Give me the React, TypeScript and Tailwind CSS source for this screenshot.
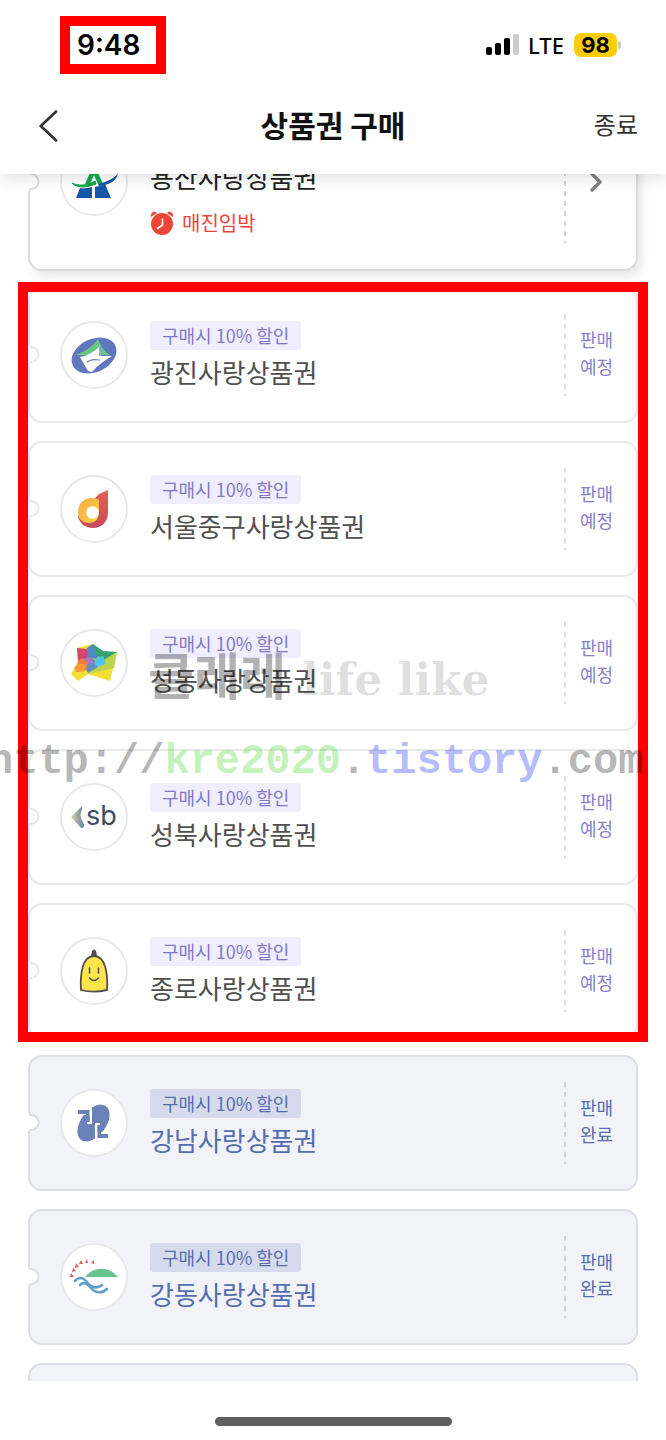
import type { ReactNode } from 'react';
import { ChevronRight } from 'lucide-react';

type Status = 'open' | 'scheduled' | 'soldout';

interface Voucher {
  name: string;
  logo: ReactNode;
}

const DISCOUNT = '구매시 10% 할인';

const cardStyles: Record<Status, string> = {
  open: 'h-[178px] border-[#dcdcdc] bg-white shadow-[4px_6px_10px_rgba(0,0,0,0.09)]',
  scheduled: 'h-[136px] border-[#e8e8e8] bg-white',
  soldout: 'h-[136px] border-[#dddfe7] bg-[#f2f3f8]',
};

const badgeStyles: Record<Status, string> = {
  open: 'bg-[#efedfe] text-[#7f7ac8]',
  scheduled: 'bg-[#efedfe] text-[#7f7ac8]',
  soldout: 'bg-[#d5dbed] text-[#566db0]',
};

const nameStyles: Record<Status, string> = {
  open: 'text-[#222222]',
  scheduled: 'text-[#505050]',
  soldout: 'text-[#566db0]',
};

const dashStyles: Record<Status, string> = {
  open: 'h-[122px] text-[#d4d4d4]',
  scheduled: 'h-[82px] text-[#dedede]',
  soldout: 'h-[82px] text-[#cfd0d8]',
};

const notchStyles: Record<Status, string> = {
  open: 'fill-white stroke-[#dcdcdc]',
  scheduled: 'fill-[#fafafa] stroke-[#e8e8e8]',
  soldout: 'fill-white stroke-[#dddfe7]',
};

function YongsanLogo() {
  return (
    <svg viewBox="0 0 68 68" className="size-17">
      <path d="M34 16 L43 36 L38 36 L34 27 L30 36 L25 36 Z" fill="#12a84f" />
      <path d="M20 40 Q26 41 32 39 V50 H16 Z" fill="#1456a8" />
      <path d="M35 39 Q41 38 45 36 L51 50 H35 Z" fill="#1456a8" />
      <path d="M12 35 C16 40 27 40 36 36 L35 33 C28 38 18 38 12 35 Z" fill="#12a84f" stroke="#12a84f" strokeWidth="1" />
      <path d="M38 36 C47 34 55 30 58 25 C57 33 49 37 39 38 Z" fill="#1456a8" />
    </svg>
  );
}

function GwangjinLogo() {
  return (
    <svg viewBox="0 0 68 68" className="size-17">
      <ellipse cx="34" cy="34.500" rx="23.500" ry="16.500" transform="rotate(-25 34 34.500)" fill="#6077bd" />
      <path d="M15 34 C24 31 31 27 38 18 C41 25 44 30 50 34 Z" fill="#62c884" />
      <path d="M20 36 C29 34 36 30 40 24 L41 35 L52 35 C45 39 38 44 32 51 L28 50 Z" fill="#fff" />
      <path d="M27 41 C32 37 36 39 40 39 M40 25 V35" fill="none" stroke="#6077bd" strokeWidth="1.200" />
    </svg>
  );
}

function JungguLogo() {
  return (
    <svg viewBox="0 0 68 68" className="size-17">
      <defs>
        <linearGradient id="junggu-ring" x1="0" y1="0" x2="1" y2="1">
          <stop offset="0" stopColor="#f6a94a" />
          <stop offset="1" stopColor="#ffd23f" />
        </linearGradient>
        <linearGradient id="junggu-stem" x1="0" y1="0" x2="0" y2="1">
          <stop offset="0" stopColor="#e26257" />
          <stop offset="1" stopColor="#c94a5b" />
        </linearGradient>
      </defs>
      <path d="M39 19 L48 15 V38 C48 47 41 53 33 53 C25 53 19 48 18 41 Z" fill="url(#junggu-stem)" />
      <path d="M39 25 C30 20 18 25 18 37 C18 44 22 48 29 48 C35 48 39 44 39 37 Z" fill="url(#junggu-ring)" />
      <circle cx="32.500" cy="37.500" r="6.300" fill="#fff" />
    </svg>
  );
}

function SeongdongLogo() {
  return (
    <svg viewBox="0 0 68 68" className="size-17">
      <path d="M17 19 L33 15 L42 23 L57 23 L50 52 L28 45 L18 52 L11 45 L18 33 Z" fill="#f3de35" />
      <path d="M17 19 L27 20 L30 29 L18 33 Z" fill="#d84470" />
      <path d="M27 19 L33 15 L42 23 L36 30 L28 28 Z" fill="#4f88c8" />
      <path d="M33 15 L43 22 L57 23 L43 32 L36 25 Z" fill="#35a36f" />
      <path d="M57 23 L54 39 L28 45 L42 32 Z" fill="#bcd34b" />
      <path d="M27 27 L36 31 L38 38 L28 44 L24 37 Z" fill="#638ec4" />
      <path d="M36 29 L43 27 L46 34 L39 38 L34 35 Z" fill="#55c5e4" />
      <path d="M22 30 L30 28 L35 34 L27 35 Z" fill="#a978b8" />
      <path d="M18 32 L22 29 L28 34 L26 41 L16 43 Z" fill="#ef7d3c" />
      <path d="M16 42 L14 39 L19 34 L27 37 L23 43 Z" fill="#f29b38" />
    </svg>
  );
}

function SeongbukLogo() {
  return (
    <svg viewBox="0 0 68 68" className="size-17">
      <defs>
        <linearGradient id="seongbuk-leaf" x1="0" y1="0" x2="1" y2="0">
          <stop offset="0" stopColor="#d4d4a8" />
          <stop offset="1" stopColor="#71839a" />
        </linearGradient>
      </defs>
      <path d="M22 23 L11 34 L21 45 C24 45 25 43 23 39 C20 34 20 31 22 27 Z" fill="url(#seongbuk-leaf)" />
      <text x="26" y="42" fontSize="27" className="fill-[#414a63] font-[Inter,sans-serif]">
        sb
      </text>
    </svg>
  );
}

function JongnoLogo() {
  return (
    <svg viewBox="0 0 68 68" className="size-17">
      <path d="M31 19 L32 14 Q34 11 36 14 L37 19 Z" fill="#554c4c" />
      <path
        d="M21 53 C20 38 22 19 34 19 C46 19 48 38 47 53 C38 55 29 55 21 53 Z"
        fill="#fde54a"
        stroke="#554c4c"
        strokeWidth="1.800"
      />
      <path d="M29.500 31 V36 M38.500 31 V36 M29.500 41 Q34 46 38.500 41" fill="none" stroke="#554c4c" strokeWidth="1.600" strokeLinecap="round" />
    </svg>
  );
}

function GangnamLogo() {
  return (
    <svg viewBox="0 0 68 68" className="size-17">
      <ellipse cx="33.500" cy="34" rx="21" ry="12.500" transform="rotate(-53 33.500 34)" fill="#6b82b9" />
      <path d="M16 17 H32 V35 H27 V26 H16 Z M51 52 H35 V34 H40 V43 H51 Z" fill="#fff" />
      <path d="M18 21 H29.500 V33 H26 V25 H18 Z M48 49 H37.500 V36 H41 V45 H48 Z" fill="#6b82b9" />
      <path d="M22 33 H29.500 V26 L26 26 Z M45 36 H37.500 V43 L41 43 Z" fill="#6b82b9" />
    </svg>
  );
}

function GangdongLogo() {
  return (
    <svg viewBox="0 0 68 68" className="size-17">
      <g fill="#e0605c">
        <path d="M10 34 L11 30 L14 34 Z" />
        <path d="M12 29 L13 25 L16 28 Z" />
        <path d="M15 25 L16 20 L19 24 Z" />
        <path d="M19 21 L21 17 L23 21 Z" />
        <path d="M25 20 L27 16 L28 20 Z" />
        <path d="M31 20 L34 17 L34 21 Z" />
      </g>
      <path d="M25 34 C33 24 48 22 58 34 Z" fill="#67c48f" />
      <g fill="none" stroke="#5f9fce" strokeWidth="2.600" strokeLinecap="round">
        <path d="M15 38 C18 34 23 34 26 38 C31 45 37 46 42 42" />
        <path d="M20 42 C24 38 28 41 31 45 C36 51 43 50 47 46" />
      </g>
    </svg>
  );
}

function AlarmIcon() {
  return (
    <svg viewBox="0 0 24 24" className="size-6">
      <path d="M1 6 C0 2 4 -1 7 2 Z M23 6 C24 2 20 -1 17 2 Z" fill="#ee4538" />
      <circle cx="12" cy="13" r="11" fill="#ee4538" />
      <path d="M12.500 8 V14 L7.500 17.500" fill="none" stroke="#fff" strokeWidth="1.600" strokeLinecap="round" />
    </svg>
  );
}

function Notch({ status }: { status: Status }) {
  return (
    <svg viewBox="0 0 13 32" className="absolute top-1/2 -left-[3px] h-8 w-[13px] -translate-y-1/2">
      <path d="M0 4 H2 V28 H0 Z" fill="#fff" />
      <path
        d="M2 0 V4 Q2 8 4 8 A7 7 0 0 1 4 23 Q2 23 2 27 V32"
        className={notchStyles[status]}
        strokeWidth="2"
      />
    </svg>
  );
}

function VoucherCard({ voucher, status }: { voucher?: Voucher; status: Status }) {
  return (
    <div className={`relative flex items-center rounded-[14px] border-2 pr-5 pl-[30px] ${cardStyles[status]}`}>
      {voucher && (
        <>
          <Notch status={status} />
          <div className="flex size-[68px] shrink-0 items-center justify-center overflow-hidden rounded-full border-2 border-[#e8e8e8] bg-white">
            <div className="shrink-0">{voucher.logo}</div>
          </div>
          <div className="ml-[22px] flex min-w-0 flex-1 flex-col items-start">
            <span className={`rounded-[3px] px-3 text-[18px] leading-[29px] ${badgeStyles[status]}`}>{DISCOUNT}</span>
            <span className={`mt-1 text-[26px] leading-9 ${nameStyles[status]}`}>{voucher.name}</span>
            {status === 'open' && (
              <span className="mt-3 flex items-center gap-2 text-[20px] leading-8 text-[#ee4538]">
                <AlarmIcon />
                매진임박
              </span>
            )}
          </div>
          <div
            className={`w-[2px] bg-[repeating-linear-gradient(to_bottom,currentColor_0_5px,transparent_5px_10px)] ${dashStyles[status]}`}
          />
          {status === 'open' ? (
            <ChevronRight className="mr-1 ml-3.5 size-8 text-[#808080]" strokeWidth={2.5} />
          ) : (
            <p
              className={`ml-3.5 w-9 pb-1 text-[18px] leading-[27px] ${status === 'scheduled' ? 'text-[#8781cb]' : 'text-[#566db0]'}`}
            >
              판매
              <br />
              {status === 'scheduled' ? '예정' : '완료'}
            </p>
          )}
        </>
      )}
    </div>
  );
}

const scheduled: Voucher[] = [
  { name: '광진사랑상품권', logo: <GwangjinLogo /> },
  { name: '서울중구사랑상품권', logo: <JungguLogo /> },
  { name: '성동사랑상품권', logo: <SeongdongLogo /> },
  { name: '성북사랑상품권', logo: <SeongbukLogo /> },
  { name: '종로사랑상품권', logo: <JongnoLogo /> },
];

const soldOut: Voucher[] = [
  { name: '강남사랑상품권', logo: <GangnamLogo /> },
  { name: '강동사랑상품권', logo: <GangdongLogo /> },
];

function StatusBar() {
  return (
    <div className="flex h-[90px] items-center justify-between pr-[45px] pl-[60px]">
      <div className="flex h-[58px] w-[106px] items-center border-10 border-[#ff0000] pl-[7px] font-[Inter,sans-serif] text-[28px] font-semibold text-black">
        9:48
      </div>
      <div className="flex items-center text-black">
        <svg viewBox="0 0 34 22" className="h-[22px] w-[34px]">
          <rect x="0" y="13" width="6" height="8" rx="2" />
          <rect x="9" y="9" width="6" height="12" rx="2" />
          <rect x="18" y="4" width="6" height="17" rx="2" />
          <rect x="27" y="0" width="6" height="21" rx="2" fill="#cccccc" />
        </svg>
        <span className="ml-2 font-['Noto_Sans',sans-serif] text-[22px] leading-6 font-medium">LTE</span>
        <span className="ml-2.5 flex h-6 w-[43px] items-center justify-center rounded-[7px] bg-[#ffcc0a] font-[Inter,sans-serif] text-[22px] font-bold">
          98
        </span>
        <span className="ml-px h-2 w-[3px] rounded-r-full bg-[#c8c8c8]" />
      </div>
    </div>
  );
}

export default function App() {
  return (
    <div className="relative flex h-screen flex-col overflow-hidden bg-white font-['Noto_Sans_CJK_KR',sans-serif]">
      <header className="relative z-10 shrink-0 bg-white pb-3 shadow-[0_4px_14px_rgba(0,0,0,0.12)]">
        <StatusBar />
        <nav className="flex h-[72px] items-center justify-between px-7 pb-1">
          <div className="flex flex-1">
            <button type="button" aria-label="뒤로">
              <svg viewBox="0 0 40 40" className="size-10 pt-1">
                <path d="M29 4 L12 20 L29 36" fill="none" stroke="#333333" strokeWidth="3" strokeLinecap="round" />
              </svg>
            </button>
          </div>
          <h1 className="text-[30px] leading-10 font-bold text-[#111111]">상품권 구매</h1>
          <div className="flex flex-1 justify-end">
            <button type="button" className="text-[24px] leading-8 text-[#333333]">
              종료
            </button>
          </div>
        </nav>
      </header>

      <main className="min-h-0 flex-1 overflow-hidden px-7">
        <div className="-mt-[81px] flex flex-col gap-4">
          <a href="#yongsan">
            <VoucherCard status="open" voucher={{ name: '용산사랑상품권', logo: <YongsanLogo /> }} />
          </a>

          <section className="relative">
            <ul className="flex flex-col gap-[18px]">
              {scheduled.map((voucher) => (
                <li key={voucher.name}>
                  <VoucherCard voucher={voucher} status="scheduled" />
                </li>
              ))}
            </ul>
            <div className="pointer-events-none absolute -inset-x-[10px] -top-[5px] -bottom-[3px] border-10 border-[#ff0000]" />
            <div className="pointer-events-none absolute top-[345px] -left-10 font-bold whitespace-nowrap text-black/30">
              <p className="flex items-baseline gap-4 pl-[160px] leading-[82px]">
                <span className="text-[50px] leading-[82px]">클래레</span>
                <span className="font-['DejaVu_Serif',serif] text-[44px] leading-[82px] text-black/13">life like</span>
              </p>
              <p className="font-['Liberation_Mono',monospace] text-[42px] leading-[82px]">
                http://<span className="text-[#32d214]/30">kre2020</span>.
                <span className="text-[#0010ff]/30">tistory</span>.com
              </p>
            </div>
          </section>

          <ul className="flex flex-col gap-[18px]">
            {soldOut.map((voucher) => (
              <li key={voucher.name}>
                <VoucherCard voucher={voucher} status="soldout" />
              </li>
            ))}
            <li>
              <VoucherCard status="soldout" />
            </li>
          </ul>
        </div>
      </main>

      <footer className="flex h-[59px] shrink-0 justify-center pt-9">
        <div className="h-[9px] w-[237px] rounded-full bg-[#5f5f5f]" />
      </footer>
    </div>
  );
}
